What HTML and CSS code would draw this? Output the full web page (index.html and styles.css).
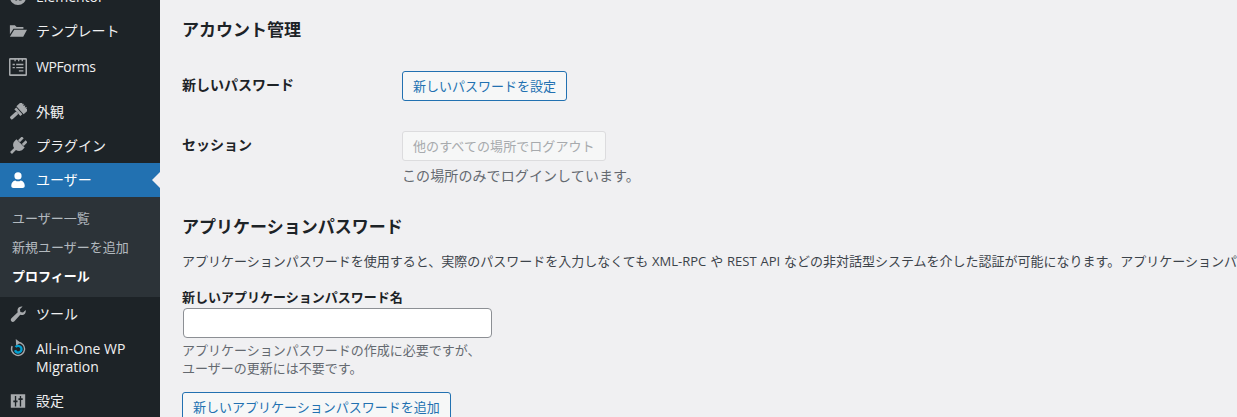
FILE: index.html
```html
<!DOCTYPE html>
<html lang="ja">
<head>
  <meta charset="UTF-8">
  <title>プロフィール</title>
  <link rel="stylesheet" href="styles.css">
</head>
<body>
  <div class="wrap">
    <nav class="sidebar">
      <ul class="menu">
        <li class="menu-item">
          <svg class="icon" viewBox="0 0 20 20"><circle cx="10" cy="10" r="9"/><path d="M7 6h2v8H7zM11 6h3v2h-3zM11 9h3v2h-3zM11 12h3v2h-3z" fill="#1d2327"/></svg>
          <span>Elementor</span>
        </li>
        <li class="menu-item">
          <svg class="icon" viewBox="0 0 20 20"><path d="M1 3.500h5.500l2 2H16V7.500H5L1 13.500zM5.800 8.500H20l-4.200 8H1z"/></svg>
          <span>テンプレート</span>
        </li>
        <li class="menu-item forms-item">
          <svg class="icon" viewBox="0 0 20 20"><path fill-rule="evenodd" d="M1.500 0h17A1.500 1.500 0 0 1 20 1.500v17a1.500 1.500 0 0 1-1.500 1.500h-17A1.500 1.500 0 0 1 0 18.500v-17A1.500 1.500 0 0 1 1.500 0zm.2 2v16h16.600V2h-2.800v1.500h-1.500V2h-2.500v1.500h-1.500V2H7.500v1.500H6V2zM4 6.500h2.500V8H4zm4 0h8V8H8zM4 10h2.500v1.500H4zm4 0h8v1.500H8zm3 3.500h5V15h-5z"/></svg>
          <span>WPForms</span>
        </li>
        <li class="menu-sep"></li>
        <li class="menu-item">
          <svg class="icon" viewBox="0 0 20 20"><g transform="rotate(48 10 10)"><path d="M4 7V-1h1.800l.7 2 1-2 1.200 2 1.300-2 1.200 2 1.300-2 1 2 1-2H16v8z"/><path d="M5 8h10v3H5z"/><rect x="8" y="11" width="4" height="10" rx="1.500"/></g></svg>
          <span>外観</span>
        </li>
        <li class="menu-item">
          <svg class="icon" viewBox="0 0 20 20"><g transform="rotate(45 10 10)"><path d="M5.500-.5H8.500V5.500H5.500zM11.500-.5h3V5.500h-3z"/><path d="M3.500 6h13v3c0 3-2.500 5.200-5 5.700V21h-3v-6.300C6 14.200 3.500 12 3.500 9z"/></g></svg>
          <span>プラグイン</span>
        </li>
        <li class="menu-item is-current">
          <svg class="icon" viewBox="0 0 20 20"><circle cx="10" cy="5.500" r="4"/><path d="M2.500 16.500c0-3.500 2-5.500 4.500-6 1.500 1.300 4.500 1.300 6 0 2.500.5 4.500 2.500 4.500 6 0 1.500-1 2.500-2.500 2.500H5c-1.500 0-2.500-1-2.500-2.500z"/></svg>
          <span>ユーザー</span>
        </li>
        <li class="submenu">
          <a class="submenu-link">ユーザー一覧</a>
          <a class="submenu-link">新規ユーザーを追加</a>
          <a class="submenu-link is-active">プロフィール</a>
        </li>
        <li class="menu-item">
          <svg class="icon" viewBox="0 0 20 20"><path d="M18.500 5.500c.5 2-.2 4-1.800 5-1.300.8-2.800.9-4.200.4L6 18c-1 1-2.500 1-3.400.1C1.700 17 1.800 15.600 2.700 14.700l7-6.700c-.5-1.400-.4-3 .4-4.300 1-1.600 3-2.400 5-1.900l-3 3 .6 2.900 2.900.7z"/></svg>
          <span>ツール</span>
        </li>
        <li class="menu-item migration-item">
          <svg class="icon" viewBox="0 0 20 20"><path d="M10 3a8 8 0 1 1-7.200 4.600l1.500.7A6.400 6.400 0 1 0 10 4.600z"/><path d="M7.500 0 12.500 3.800 8 7.500z"/><path class="icon-ring" d="M7.300 9a3.700 3.700 0 1 1-.6 3.500"/></svg>
          <span>All-in-One WP Migration</span>
        </li>
        <li class="menu-item">
          <svg class="icon" viewBox="0 0 20 20"><path d="M2 2.500h16v15H2z"/><path class="icon-cut" d="M6.500 4.500H8V9.500h1.500v2H8v4.500H6.500v-4.500H4.800v-2h1.700zM12 4.500h1.500V7h1.700v2h-1.700v7H12V9h-1.500V7H12z"/></svg>
          <span>設定</span>
        </li>
      </ul>
    </nav>

    <main class="content">
      <h2 class="section-title account-title">アカウント管理</h2>

      <div class="form-row password-row">
        <div class="form-label">新しいパスワード</div>
        <div><button class="btn">新しいパスワードを設定</button></div>
      </div>

      <div class="form-row session-row">
        <div class="form-label">セッション</div>
        <div>
          <button class="btn" disabled>他のすべての場所でログアウト</button>
          <p class="session-note">この場所のみでログインしています。</p>
        </div>
      </div>

      <h2 class="section-title app-title">アプリケーションパスワード</h2>
      <p class="app-intro">アプリケーションパスワードを使用すると、実際のパスワードを入力しなくても XML-RPC や REST API などの非対話型システムを介した認証が可能になります。アプリケーションパスワードは簡単に取り消すことができます。</p>

      <label class="field-label" for="appName">新しいアプリケーションパスワード名</label>
      <input class="field-input" id="appName" type="text">
      <p class="field-help">アプリケーションパスワードの作成に必要ですが、<br>ユーザーの更新には不要です。</p>
      <button class="btn">新しいアプリケーションパスワードを追加</button>
    </main>
  </div>
</body>
</html>
```

FILE: styles.css
```css
/* Reset */
body, h2, p, ul, li {
    margin: 0;
    padding: 0;
}

body {
    height: 417px;
    overflow: hidden;
    background-color: #f0f0f2;
    color: #3c434a;
    font-family: "Open Sans", "Noto Sans CJK JP", sans-serif;
    font-size: 13px;
}

.wrap {
    display: flex;
    height: 417px;
    overflow: hidden;
}

/* Sidebar */
.sidebar {
    flex: 0 0 160px;
    height: 417px;
    overflow: hidden;
    background-color: #1d2327;
}

.menu {
    list-style: none;
    margin-top: -20px;
}

.menu-item {
    display: flex;
    align-items: center;
    gap: 9px;
    min-height: 34px;
    padding-left: 9px;
    color: #f0f0f1;
    font-size: 14px;
    line-height: 18px;
}

.icon {
    flex: none;
    width: 18px;
    height: 18px;
    fill: #a7aaad;
}

.icon-ring {
    fill: none;
    stroke: #00a0d2;
    stroke-width: 2.6;
}

.icon-cut {
    fill: #1d2327;
}

.forms-item {
    margin-top: 2px;
    letter-spacing: -0.4px;
}

.menu-sep {
    height: 11px;
}

.is-current {
    position: relative;
    background-color: #2271b1;
    color: #fff;
}

.is-current .icon {
    fill: #fff;
}

.is-current::after {
    content: "";
    position: absolute;
    right: 0;
    top: 9px;
    border: 8px solid transparent;
    border-right-color: #f0f0f2;
    border-left-width: 0;
}

.submenu {
    display: flex;
    flex-direction: column;
    padding: 7px 0 6px;
    background-color: #2c3338;
}

.submenu-link {
    padding-left: 12px;
    color: rgba(240, 246, 252, 0.7);
    font-size: 13px;
    line-height: 29px;
}

.is-active {
    color: #fff;
    font-weight: 700;
}

.migration-item {
    align-items: flex-start;
    padding-top: 8px;
    padding-bottom: 8px;
}

.migration-item span {
    margin-top: 1px;
}

/* Content */
.content {
    flex: 1;
    min-width: 0;
    padding-left: 22px;
}

.section-title {
    color: #1d2327;
    font-size: 17px;
    font-weight: 600;
    line-height: 24px;
}

.account-title {
    margin-top: 18px;
}

.form-row {
    display: flex;
}

.form-label {
    flex: 0 0 220px;
    color: #1d2327;
    font-size: 14px;
    font-weight: 600;
    line-height: 20px;
}

.password-row {
    margin-top: 29px;
}

.password-row .form-label {
    padding-top: 4px;
}

.session-row {
    margin-top: 30px;
}

.session-row .form-label {
    padding-top: 4px;
}

.btn {
    display: block;
    height: 30px;
    padding: 0 10px;
    border: 1px solid #2271b1;
    border-radius: 3px;
    background-color: #f6f7f7;
    color: #2271b1;
    font-family: inherit;
    font-size: 13px;
    line-height: 28px;
}

.btn:disabled {
    border-color: #dcdcde;
    color: #a7aaad;
    letter-spacing: 0.08px;
}

.session-note {
    margin-top: 4px;
    color: #646970;
    font-size: 14px;
    line-height: 22px;
    letter-spacing: 0.1px;
}

.app-title {
    margin-top: 28px;
}

.app-intro {
    margin-top: 12px;
    color: #3c434a;
    line-height: 20px;
    white-space: nowrap;
    word-spacing: 0.5px;
}

.field-label {
    display: block;
    margin-top: 17px;
    color: #1d2327;
    font-weight: 600;
    line-height: 18px;
}

.field-input {
    display: block;
    box-sizing: border-box;
    width: 309px;
    height: 30px;
    margin: 2px 0 0 1px;
    border: 1px solid #8c8f94;
    border-radius: 4px;
    background-color: #fff;
}

.field-help {
    margin-top: 3px;
    color: #646970;
    line-height: 18px;
}

.field-help + .btn {
    margin-top: 15px;
}
```
